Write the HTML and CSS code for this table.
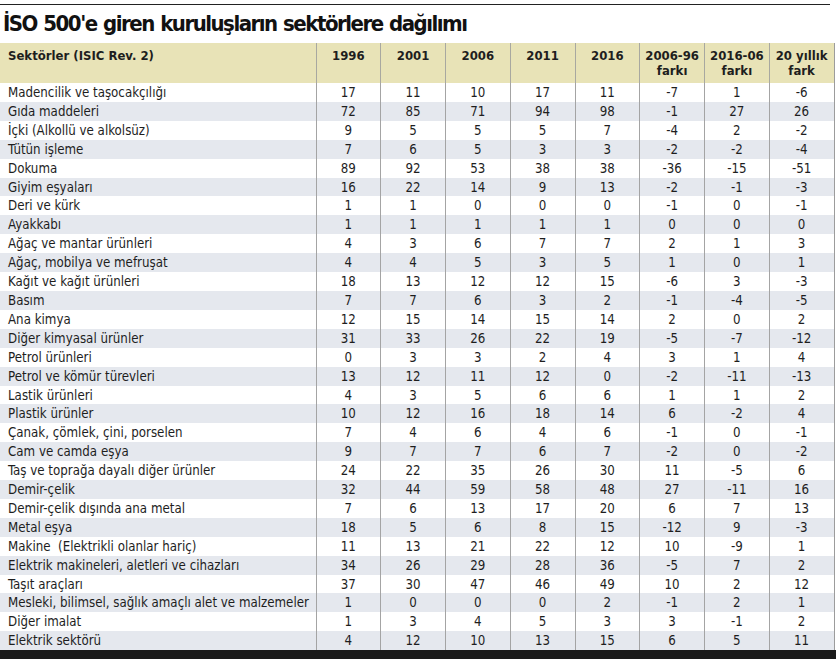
FILE: index.html
```html
<!DOCTYPE html>
<html lang="tr">
<head>
<meta charset="utf-8">
<link rel="stylesheet" href="styles.css">
</head>
<body>
<div class="page">
  <div class="rule"></div>
  <h1 class="title">İSO 500'e giren kuruluşların sektörlere dağılımı</h1>
  <table class="data">
    <colgroup>
      <col class="c-name"><col class="c-num"><col class="c-num"><col class="c-num"><col class="c-num"><col class="c-num"><col class="c-num"><col class="c-num"><col class="c-num">
    </colgroup>
    <thead>
      <tr>
        <th class="name">Sektörler (ISIC Rev. 2)</th>
        <th>1996</th><th>2001</th><th>2006</th><th>2011</th><th>2016</th>
        <th>2006-96<br>farkı</th><th>2016-06<br>farkı</th><th>20 yıllık<br>fark</th>
      </tr>
    </thead>
    <tbody>
      <tr><td class="name">Madencilik ve taşocakçılığı</td><td>17</td><td>11</td><td>10</td><td>17</td><td>11</td><td>-7</td><td>1</td><td>-6</td></tr>
      <tr><td class="name">Gıda maddeleri</td><td>72</td><td>85</td><td>71</td><td>94</td><td>98</td><td>-1</td><td>27</td><td>26</td></tr>
      <tr><td class="name">İçki (Alkollü ve alkolsüz)</td><td>9</td><td>5</td><td>5</td><td>5</td><td>7</td><td>-4</td><td>2</td><td>-2</td></tr>
      <tr><td class="name">Tütün işleme</td><td>7</td><td>6</td><td>5</td><td>3</td><td>3</td><td>-2</td><td>-2</td><td>-4</td></tr>
      <tr><td class="name">Dokuma</td><td>89</td><td>92</td><td>53</td><td>38</td><td>38</td><td>-36</td><td>-15</td><td>-51</td></tr>
      <tr><td class="name">Giyim eşyaları</td><td>16</td><td>22</td><td>14</td><td>9</td><td>13</td><td>-2</td><td>-1</td><td>-3</td></tr>
      <tr><td class="name">Deri ve kürk</td><td>1</td><td>1</td><td>0</td><td>0</td><td>0</td><td>-1</td><td>0</td><td>-1</td></tr>
      <tr><td class="name">Ayakkabı</td><td>1</td><td>1</td><td>1</td><td>1</td><td>1</td><td>0</td><td>0</td><td>0</td></tr>
      <tr><td class="name">Ağaç ve mantar ürünleri</td><td>4</td><td>3</td><td>6</td><td>7</td><td>7</td><td>2</td><td>1</td><td>3</td></tr>
      <tr><td class="name">Ağaç, mobilya ve mefruşat</td><td>4</td><td>4</td><td>5</td><td>3</td><td>5</td><td>1</td><td>0</td><td>1</td></tr>
      <tr><td class="name">Kağıt ve kağıt ürünleri</td><td>18</td><td>13</td><td>12</td><td>12</td><td>15</td><td>-6</td><td>3</td><td>-3</td></tr>
      <tr><td class="name">Basım</td><td>7</td><td>7</td><td>6</td><td>3</td><td>2</td><td>-1</td><td>-4</td><td>-5</td></tr>
      <tr><td class="name">Ana kimya</td><td>12</td><td>15</td><td>14</td><td>15</td><td>14</td><td>2</td><td>0</td><td>2</td></tr>
      <tr><td class="name">Diğer kimyasal ürünler</td><td>31</td><td>33</td><td>26</td><td>22</td><td>19</td><td>-5</td><td>-7</td><td>-12</td></tr>
      <tr><td class="name">Petrol ürünleri</td><td>0</td><td>3</td><td>3</td><td>2</td><td>4</td><td>3</td><td>1</td><td>4</td></tr>
      <tr><td class="name">Petrol ve kömür türevleri</td><td>13</td><td>12</td><td>11</td><td>12</td><td>0</td><td>-2</td><td>-11</td><td>-13</td></tr>
      <tr><td class="name">Lastik ürünleri</td><td>4</td><td>3</td><td>5</td><td>6</td><td>6</td><td>1</td><td>1</td><td>2</td></tr>
      <tr><td class="name">Plastik ürünler</td><td>10</td><td>12</td><td>16</td><td>18</td><td>14</td><td>6</td><td>-2</td><td>4</td></tr>
      <tr><td class="name">Çanak, çömlek, çini, porselen</td><td>7</td><td>4</td><td>6</td><td>4</td><td>6</td><td>-1</td><td>0</td><td>-1</td></tr>
      <tr><td class="name">Cam ve camda eşya</td><td>9</td><td>7</td><td>7</td><td>6</td><td>7</td><td>-2</td><td>0</td><td>-2</td></tr>
      <tr><td class="name">Taş ve toprağa dayalı diğer ürünler</td><td>24</td><td>22</td><td>35</td><td>26</td><td>30</td><td>11</td><td>-5</td><td>6</td></tr>
      <tr><td class="name">Demir-çelik</td><td>32</td><td>44</td><td>59</td><td>58</td><td>48</td><td>27</td><td>-11</td><td>16</td></tr>
      <tr><td class="name">Demir-çelik dışında ana metal</td><td>7</td><td>6</td><td>13</td><td>17</td><td>20</td><td>6</td><td>7</td><td>13</td></tr>
      <tr><td class="name">Metal eşya</td><td>18</td><td>5</td><td>6</td><td>8</td><td>15</td><td>-12</td><td>9</td><td>-3</td></tr>
      <tr><td class="name">Makine&nbsp; (Elektrikli olanlar hariç)</td><td>11</td><td>13</td><td>21</td><td>22</td><td>12</td><td>10</td><td>-9</td><td>1</td></tr>
      <tr><td class="name">Elektrik makineleri, aletleri ve cihazları</td><td>34</td><td>26</td><td>29</td><td>28</td><td>36</td><td>-5</td><td>7</td><td>2</td></tr>
      <tr><td class="name">Taşıt araçları</td><td>37</td><td>30</td><td>47</td><td>46</td><td>49</td><td>10</td><td>2</td><td>12</td></tr>
      <tr><td class="name">Mesleki, bilimsel, sağlık amaçlı alet ve malzemeler</td><td>1</td><td>0</td><td>0</td><td>0</td><td>2</td><td>-1</td><td>2</td><td>1</td></tr>
      <tr><td class="name">Diğer imalat</td><td>1</td><td>3</td><td>4</td><td>5</td><td>3</td><td>3</td><td>-1</td><td>2</td></tr>
      <tr><td class="name">Elektrik sektörü</td><td>4</td><td>12</td><td>10</td><td>13</td><td>15</td><td>6</td><td>5</td><td>11</td></tr>
    </tbody>
  </table>
  <div class="footbar"></div>
</div>
</body>
</html>
```
FILE: styles.css
```css
html, body {
  margin: 0;
  padding: 0;
  background: #ffffff;
}
.page {
  width: 836px;
  padding-top: 4px;
  font-family: "DejaVu Sans Condensed", "DejaVu Sans", sans-serif;
  color: #1e1e1e;
}
.rule {
  width: 830px;
  height: 1px;
  background: #222;
}
.title {
  margin: 0;
  padding: 5px 0 0 3px;
  height: 36px;
  box-sizing: border-box;
  font-size: 22px;
  line-height: 28px;
  font-weight: bold;
  letter-spacing: -1.5px;
  word-spacing: 1px;
  color: #111;
}
.data {
  width: 834px;
  border-collapse: collapse;
  table-layout: fixed;
  margin-top: 2px;
  border-right: 1px solid #9c9c9c;
}
.c-name { width: 316px; }
.c-num { width: 64.75px; }
.data th {
  background: #e8e3b7;
  height: 40px;
  padding: 5px 0 0;
  box-sizing: border-box;
  vertical-align: top;
  font-size: 13px;
  line-height: 15px;
  font-weight: bold;
  text-align: center;
  border-left: 1px solid #a8a8a0;
  color: #1e1e1e;
}
.data th.name {
  text-align: left;
  padding-left: 8px;
  border-left: none;
}
.data td {
  height: 18.9px;
  padding: 2px 0 0;
  box-sizing: border-box;
  font-size: 13.2px;
  line-height: 16.9px;
  text-align: center;
  border-left: 1px solid #a4a4a4;
  white-space: nowrap;
}
.data td.name {
  text-align: left;
  padding-left: 8px;
  border-left: none;
}
.data tbody tr:nth-child(even) td {
  background: #e5e8ee;
}
.footbar {
  height: 9px;
  background: #1a1a1a;
}
```
